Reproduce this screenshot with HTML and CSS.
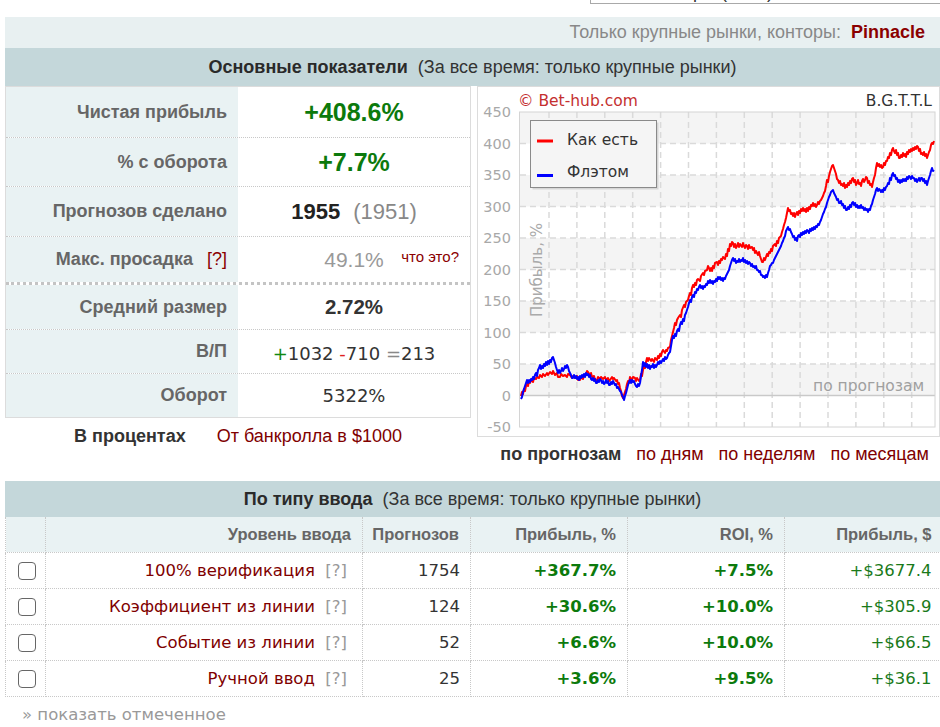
FILE: index.html
```html
<!DOCTYPE html>
<html lang="ru">
<head>
<meta charset="utf-8">
<title>Статистика</title>
<link rel="stylesheet" href="styles.css">
</head>
<body>
<div class="page">
  <div class="topstrip">
    <div class="selwrap"><div class="select">Все конторы (1955)</div></div>
  </div>
  <div class="filterbar">Только крупные рынки, конторы:&nbsp; <b>Pinnacle</b></div>
  <div class="shead"><b>Основные показатели</b>&nbsp; (За все время: только крупные рынки)</div>

  <div class="main">
    <div class="leftcol">
      <div class="stats">
        <div class="row r1"><div class="lbl">Чистая прибыль</div><div class="val"><span class="big green">+408.6%</span></div></div>
        <div class="row r2"><div class="lbl">% с оборота</div><div class="val"><span class="big green">+7.7%</span></div></div>
        <div class="row r3"><div class="lbl">Прогнозов сделано</div><div class="val"><b class="cnt">1955</b><span class="cnt muted">(1951)</span></div></div>
        <div class="row r4 sep"><div class="lbl">Макс. просадка <span class="q">[?]</span></div><div class="val split"><span></span><span class="dd">49.1%</span><span class="what">что это?</span></div></div>
        <div class="row r5"><div class="lbl">Средний размер</div><div class="val"><b class="avg">2.72%</b></div></div>
        <div class="row r6"><div class="lbl">В/П</div><div class="val"><span class="mono wl"><span class="plus">+</span>1032 <span class="minus">-</span>710 <span class="eq">=</span>213</span></div></div>
        <div class="row r7"><div class="lbl">Оборот</div><div class="val"><span class="mono">5322%</span></div></div>
      </div>
      <div class="caption"><b>В процентах</b><span class="link">От банкролла в $1000</span></div>
    </div>

    <div class="rightcol">
      <div class="chart">
        <svg width="461" height="349" viewBox="478 87 461 349" xmlns="http://www.w3.org/2000/svg">
          <rect x="478" y="87" width="461" height="349" fill="#fff"/>
          <g fill="#f4f4f4">
            <rect x="520" y="112" width="415" height="31.5"/>
            <rect x="520" y="175" width="415" height="31.5"/>
            <rect x="520" y="238" width="415" height="31.5"/>
            <rect x="520" y="301" width="415" height="31.5"/>
            <rect x="520" y="364" width="415" height="31.5"/>
          </g>
          <g stroke="#dadada" stroke-width="1.5" stroke-dasharray="6 4" fill="none">
            <path d="M520 143.5H935M520 175H935M520 206.5H935M520 238H935M520 269.5H935M520 301H935M520 332.5H935M520 364H935"/>
            <path d="M549 112V427M576.9 112V427M604.8 112V427M632.7 112V427M660.6 112V427M688.5 112V427M716.4 112V427M744.3 112V427M772.2 112V427M800.1 112V427M828 112V427M855.9 112V427M883.8 112V427M911.7 112V427"/>
          </g>
          <line x1="520" y1="395.5" x2="935" y2="395.5" stroke="#c9c9c9" stroke-width="1.5"/>
          <rect x="519.5" y="112" width="415.5" height="315" fill="none" stroke="#d4d4d4"/>
          <g font-family="DejaVu Sans, Verdana, sans-serif" font-size="14.5" fill="#a8a8a8" text-anchor="end">
            <text x="511" y="117">450</text>
            <text x="511" y="148.5">400</text>
            <text x="511" y="180">350</text>
            <text x="511" y="211.5">300</text>
            <text x="511" y="243">250</text>
            <text x="511" y="274.5">200</text>
            <text x="511" y="306">150</text>
            <text x="511" y="337.5">100</text>
            <text x="511" y="369">50</text>
            <text x="511" y="400.5">0</text>
            <text x="511" y="432">-50</text>
          </g>
          <text x="542" y="270" transform="rotate(-90 542 270)" text-anchor="middle" font-family="DejaVu Sans, Verdana, sans-serif" font-size="15" fill="#aaa">Прибыль, %</text>
          <text x="813" y="391" font-family="DejaVu Sans, Verdana, sans-serif" font-size="15.5" fill="#a0a0a0">по прогнозам</text>
          <polyline fill="none" stroke="#ff0000" stroke-width="2" stroke-linejoin="round" points="521,396 522,392 523,394 524,389 525,391 526,386 527,384 528,386 529,381 530,383 531,380 533,382 534,378 536,379 537,377 539,378 540,375 542,377 543,374 545,376 547,373 548,375 550,372 552,374 553,371 555,375 557,373 558,377 560,377 561,374 563,376 565,375 567,377 568,374 570,375 572,378 573,376 575,378 577,376 578,380 580,380 581,377 583,379 584,376 586,374 587,371 588,372 590,375 591,373 592,377 594,376 595,380 597,380 598,377 600,379 601,377 603,379 605,377 606,380 608,378 609,381 610,380 612,377 613,379 614,378 616,381 617,380 618,384 619,383 620,388 621,391 622,396 623,398 624,395 625,392 626,389 627,384 628,381 629,383 630,377 632,380 633,377 635,378 636,381 637,378 639,381 640,380 641,374 642,376 643,370 644,366 645,368 646,362 647,358 648,361 649,358 651,361 652,359 654,362 655,358 657,360 658,356 659,358 660,354 661,356 662,352 663,350 665,353 666,350 667,351 668,348 670,347 671,340 672,336 673,332 674,328 675,323 676,325 677,320 678,318 680,315 681,317 682,310 684,305 685,307 686,302 688,300 689,296 690,293 691,295 692,288 693,285 694,287 695,283 696,285 697,280 698,279 700,281 701,276 703,273 704,275 705,271 707,270 708,266 709,268 710,271 711,268 712,271 713,266 714,268 715,263 717,262 718,265 719,261 720,263 721,259 722,260 723,257 725,259 726,254 727,256 728,249 729,251 730,244 731,246 732,242 733,243 734,247 735,244 736,248 737,246 738,243 739,247 740,244 742,247 743,243 744,246 745,248 746,245 747,246 748,249 749,245 750,248 752,247 753,250 754,248 755,253 756,251 757,253 758,255 759,252 760,256 761,259 762,262 763,262 764,258 765,260 766,257 767,254 768,256 769,252 770,253 771,249 772,251 773,246 775,244 776,246 777,241 778,243 779,238 780,237 781,236 782,232 783,229 784,225 785,222 786,218 787,213 788,208 789,211 790,210 791,214 792,213 793,216 794,213 795,217 796,214 797,212 798,215 799,211 800,213 801,209 802,211 803,208 804,211 805,209 806,212 807,208 808,211 809,207 810,209 811,205 812,206 813,203 814,206 815,204 816,207 817,205 818,202 819,204 820,201 821,200 822,198 823,196 824,193 825,191 826,186 827,180 828,182 829,176 830,172 831,169 832,166 833,165 834,168 835,171 836,174 837,179 838,180 839,183 840,181 841,185 842,184 843,186 844,183 845,188 846,185 847,187 848,183 849,185 850,181 851,183 852,179 853,178 854,182 855,180 856,185 857,183 858,180 859,184 860,183 861,186 862,181 863,179 864,182 865,180 866,177 867,178 868,183 869,181 870,185 871,184 872,187 873,182 874,178 875,175 876,168 877,163 878,166 879,164 880,167 881,165 882,168 883,167 884,163 885,165 886,161 887,161 888,157 889,158 890,153 891,155 892,150 893,148 894,151 895,153 896,150 897,155 898,153 899,158 900,158 901,155 902,157 903,153 904,156 905,154 906,157 907,152 908,154 909,150 910,152 911,149 912,151 913,148 914,150 915,147 916,149 917,146 918,147 919,151 920,149 921,154 922,153 923,155 924,152 925,156 926,154 927,158 928,155 929,152 930,150 931,145 932,143 933,144 934,141"/>
          <polyline fill="none" stroke="#0000ff" stroke-width="2" stroke-linejoin="round" points="521,399 522,397 523,392 524,389 525,386 526,383 527,380 528,383 529,380 530,382 531,379 532,380 533,377 534,379 535,375 536,373 537,376 538,370 539,368 540,365 541,369 542,366 543,368 544,364 545,366 546,362 547,365 548,361 549,364 550,360 551,362 552,358 553,357 554,360 555,363 556,367 557,370 558,373 559,370 560,373 561,371 562,368 563,371 564,369 565,366 566,368 567,365 568,367 569,371 570,373 571,375 572,378 573,378 574,375 575,378 576,376 577,379 578,377 579,380 580,376 581,378 582,375 583,377 584,374 585,377 586,373 587,375 588,374 589,377 590,375 591,379 592,380 593,378 594,381 595,379 596,383 597,383 598,380 599,382 600,379 601,380 602,383 603,381 604,384 605,383 606,380 607,383 608,381 609,385 610,385 611,382 612,384 613,381 614,383 615,385 616,384 617,388 618,387 619,389 620,391 621,392 622,395 623,397 624,400 625,396 626,393 627,389 628,385 629,382 630,380 631,383 632,380 633,382 634,381 635,384 636,386 637,387 638,384 639,386 640,383 641,376 642,370 643,362 644,366 645,363 646,367 647,364 648,368 649,365 650,369 651,366 652,367 653,364 654,368 655,365 656,367 657,365 658,362 659,364 660,361 661,363 662,361 663,359 664,361 665,357 666,359 667,358 668,355 669,353 670,352 671,346 672,340 673,336 674,338 675,334 676,336 677,331 678,329 679,331 680,325 681,322 682,324 683,319 684,321 685,315 686,313 687,310 688,307 689,303 690,300 691,302 692,297 693,295 694,297 695,292 696,293 697,289 698,290 699,287 700,285 701,288 702,286 703,289 704,286 705,287 706,284 707,285 708,281 709,283 710,280 711,283 712,281 713,284 714,281 715,282 716,279 717,281 718,277 719,279 720,277 721,280 722,278 723,281 724,278 725,279 726,276 727,274 728,272 729,270 730,266 731,263 732,260 733,258 734,261 735,259 736,263 737,261 738,262 739,259 740,262 741,260 742,261 743,258 744,262 745,260 746,263 747,261 748,264 749,262 750,263 751,266 752,264 753,267 754,266 755,268 756,266 757,270 758,270 759,272 760,271 761,275 762,275 763,277 764,276 765,278 766,275 767,277 768,273 769,270 770,266 771,265 772,263 773,263 774,260 775,258 776,256 777,254 778,252 779,250 780,248 781,246 782,243 783,241 784,238 785,236 786,231 787,229 788,227 789,230 790,229 791,232 792,234 793,237 794,236 795,240 796,238 797,241 798,236 799,235 800,237 801,233 802,235 803,232 804,234 805,231 806,233 807,230 808,231 809,233 810,229 811,231 812,228 813,230 814,227 815,229 816,226 817,227 818,224 819,225 820,222 821,220 822,217 823,214 824,212 825,209 826,207 827,203 828,200 829,197 830,195 831,192 832,191 833,190 834,193 835,195 836,197 837,200 838,199 839,203 840,203 841,201 842,205 843,204 844,208 845,206 846,210 847,210 848,207 849,209 850,205 851,207 852,203 853,202 854,205 855,203 856,207 857,205 858,208 859,206 860,208 861,205 862,208 863,207 864,210 865,208 866,210 867,209 868,212 869,209 870,210 871,206 872,204 873,200 874,197 875,194 876,190 877,188 878,191 879,189 880,190 881,192 882,190 883,192 884,188 885,190 886,187 887,186 888,183 889,184 890,178 891,180 892,175 893,173 894,176 895,175 896,179 897,178 898,182 899,180 900,183 901,180 902,182 903,179 904,181 905,179 906,181 907,177 908,179 909,176 910,177 911,179 912,176 913,178 914,178 915,181 916,179 917,182 918,180 919,178 920,181 921,178 922,178 923,181 924,179 925,183 926,181 927,185 928,181 929,178 930,175 931,171 932,168 933,171 934,170"/>
          <rect x="532.5" y="122.5" width="126" height="67" fill="#d6d6d6"/>
          <rect x="530.5" y="120.5" width="126" height="67" fill="#f5f5f5" stroke="#8a8a8a"/>
          <line x1="537" y1="141" x2="553" y2="141" stroke="#ff0000" stroke-width="3"/>
          <line x1="537" y1="175.5" x2="553" y2="175.5" stroke="#0000ff" stroke-width="3"/>
          <g font-family="DejaVu Sans, Verdana, sans-serif" font-size="15.5" fill="#333">
            <text x="567" y="145">Как есть</text>
            <text x="567" y="177">Флэтом</text>
            <text x="932" y="106" text-anchor="end">B.G.T.T.L</text>
          </g>
          <text x="518" y="106" font-family="DejaVu Sans, Verdana, sans-serif" font-size="15.5" fill="#c43030">© Bet-hub.com</text>
        </svg>
      </div>
      <div class="modes"><b>по прогнозам</b><span>по дням</span><span>по неделям</span><span>по месяцам</span></div>
    </div>
  </div>

  <div class="shead s2"><b>По типу ввода</b>&nbsp; (За все время: только крупные рынки)</div>
  <table class="grid">
    <colgroup><col class="c1"><col class="c2"><col class="c3"><col class="c4"><col class="c5"><col class="c6"></colgroup>
    <thead>
      <tr><th></th><th>Уровень ввода</th><th>Прогнозов</th><th>Прибыль, %</th><th>ROI, %</th><th>Прибыль, $</th></tr>
    </thead>
    <tbody>
      <tr><td class="cbc"><span class="cb"></span></td><td class="name">100% верификация&nbsp; <span class="q2">[?]</span></td><td class="num">1754</td><td class="pp">+367.7%</td><td class="pp">+7.5%</td><td class="usd">+$3677.4</td></tr>
      <tr><td class="cbc"><span class="cb"></span></td><td class="name">Коэффициент из линии&nbsp; <span class="q2">[?]</span></td><td class="num">124</td><td class="pp">+30.6%</td><td class="pp">+10.0%</td><td class="usd">+$305.9</td></tr>
      <tr><td class="cbc"><span class="cb"></span></td><td class="name">Событие из линии&nbsp; <span class="q2">[?]</span></td><td class="num">52</td><td class="pp">+6.6%</td><td class="pp">+10.0%</td><td class="usd">+$66.5</td></tr>
      <tr><td class="cbc"><span class="cb"></span></td><td class="name">Ручной ввод&nbsp; <span class="q2">[?]</span></td><td class="num">25</td><td class="pp">+3.6%</td><td class="pp">+9.5%</td><td class="usd">+$36.1</td></tr>
    </tbody>
  </table>
  <div class="more">» показать отмеченное</div>
</div>
</body>
</html>
```

FILE: styles.css
```css
* { box-sizing: border-box; }
html, body { margin: 0; padding: 0; background: #fff; }
body {
  font-family: "Liberation Sans", Arial, sans-serif;
  color: #333;
  overflow: hidden;
}
.page { width: 940px; padding-left: 5px; }

/* top partially visible select */
.topstrip { height: 17px; margin-left: -5px; }
.selwrap {
  margin-left: 590px;
  height: 4px;
  overflow: hidden;
  display: flex;
  align-items: flex-end;
}
.select {
  flex: none;
  width: 380px;
  height: 30px;
  border: 1px solid #a9a9a9;
  padding: 0 0 1px 20px;
  font-size: 18px;
  line-height: 20px;
  color: #333;
  display: flex;
  align-items: flex-end;
}

.filterbar {
  height: 31px;
  line-height: 31px;
  background: #e8f0f1;
  text-align: right;
  padding-right: 15px;
  font-size: 18px;
  color: #888;
}
.filterbar b { color: #8b0000; }

.shead {
  height: 38px;
  line-height: 38px;
  background: #c4d7da;
  text-align: center;
  font-size: 18px;
  color: #333;
}
.shead b { color: #2a2a2a; }

.main { display: flex; gap: 6px; }
.leftcol { width: 466px; flex: none; }
.stats { border: 1px solid #dcdcdc; }
.row { display: flex; border-bottom: 1px dotted #c8c8c8; }
.row.r7 { border-bottom: none; }
.row.sep { border-bottom: 3px dotted #c4c4c4; }
.r1 { height: 51px; }
.r2 { height: 49px; }
.r3 { height: 50px; }
.r4 { height: 48px; }
.r5 { height: 45px; }
.r6 { height: 44px; }
.r7 { height: 43px; }

.lbl {
  width: 232px;
  flex: none;
  background: #e9f2f3;
  display: flex;
  align-items: center;
  justify-content: flex-end;
  padding-right: 11px;
  font-weight: bold;
  font-size: 18px;
  color: #666;
  white-space: nowrap;
}
.lbl .q { font-weight: normal; color: #8b0000; margin-left: 14px; }
.val {
  flex: 1;
  display: flex;
  align-items: center;
  justify-content: center;
  white-space: nowrap;
}
.big { font-size: 25px; font-weight: bold; }
.green { color: #0c7a0c; }
.cnt { font-size: 22px; color: #222; }
.cnt.muted { color: #888; margin-left: 13px; }
.val.split {
  display: grid;
  grid-template-columns: 1fr auto 1fr;
  align-items: center;
}
.dd { font-size: 21px; color: #999; }
.what {
  justify-self: end;
  padding-right: 11px;
  font-size: 15px;
  color: #8b0000;
  margin-bottom: 6px;
}
.avg { font-size: 20.5px; color: #333; }
.mono {
  font-family: "DejaVu Sans", Verdana, sans-serif;
  font-size: 18px;
  color: #333;
}
.wl { padding-top: 3px; white-space: pre; }
.plus { color: #118811; }
.minus { color: #e02020; }
.eq { color: #888; }

.caption {
  height: 37px;
  display: flex;
  justify-content: center;
  align-items: center;
  gap: 31px;
  font-size: 18px;
}
.caption b { color: #333; }
.link { color: #800000; }

.rightcol { flex: 1; }
.chart { height: 351px; border: 1px solid #dcdcdc; }
.chart svg { display: block; }
.modes {
  display: flex;
  justify-content: flex-end;
  align-items: center;
  gap: 15px;
  padding-right: 11px;
  height: 34px;
  font-size: 18px;
  color: #800000;
}
.modes b { color: #333; }

.s2 { margin-top: 10px; height: 36px; line-height: 36px; }

.grid {
  width: 935px;
  border-collapse: collapse;
  table-layout: fixed;
  font-family: "DejaVu Sans", Verdana, sans-serif;
  font-size: 16.5px;
}
.c1 { width: 40px; }
.c2 { width: 317px; }
.c3 { width: 108px; }
.c4 { width: 157px; }
.c5 { width: 157px; }
.c6 { width: 156px; }
.grid th, .grid td {
  border: 1px dotted #c8c8c8;
  padding: 0 11px 0 0;
  text-align: right;
  white-space: nowrap;
}
.grid th {
  height: 35px;
  border-top: none;
  background: #e9f2f3;
  font-family: "Liberation Sans", Arial, sans-serif;
  font-weight: bold;
  font-size: 16.5px;
  color: #666;
}
.grid td { height: 36px; }
.grid tr > :last-child { border-right: none; padding-right: 9px; }
.grid td.cbc { text-align: center; padding: 0; }
.cb {
  display: inline-block;
  width: 18px;
  height: 18px;
  border: 1.5px solid #666;
  border-radius: 4px;
  background: #fff;
  vertical-align: middle;
  margin-left: 2px;
}
.grid td.name { color: #800000; padding-right: 15px; }
.q2 { color: #999; }
.grid td.num { color: #333; padding-right: 10px; }
.grid td.pp { color: #0c7a0c; font-weight: bold; }
.grid td.usd { color: #1a7a1a; }

.more {
  padding-left: 17px;
  line-height: 36px;
  font-family: "DejaVu Sans", Verdana, sans-serif;
  font-size: 16.5px;
  color: #999;
}
```
